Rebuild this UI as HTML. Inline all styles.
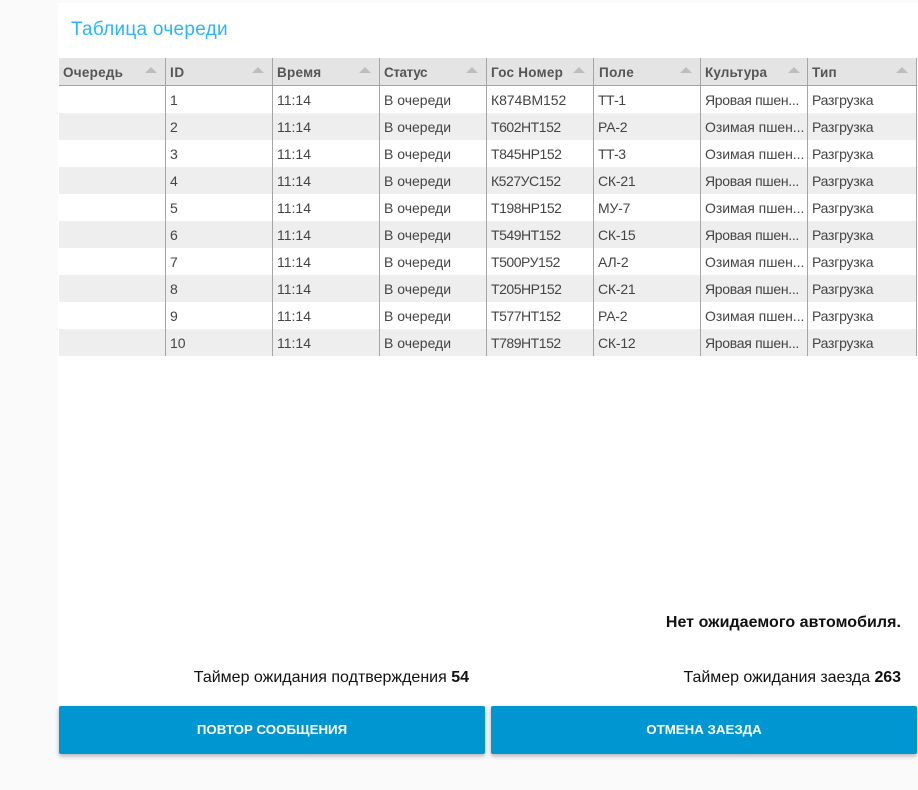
<!DOCTYPE html>
<html lang="ru">
<head>
<meta charset="utf-8">
<style>
html,body{margin:0;padding:0;width:918px;height:790px;overflow:hidden;background:#fafafa;font-family:"Liberation Sans","DejaVu Sans",sans-serif;}
#p{position:absolute;left:58px;top:3px;width:860px;height:703px;background:#fff}
#t{position:absolute;left:71px;top:19px;font-size:19px;line-height:22px;color:#29b6f6;letter-spacing:.27px;white-space:nowrap}
.th,.r,.v,.h,.a{position:absolute}
.th{left:59px;top:58px;width:858px;height:27px;background:#e4e4e4}
.l{position:absolute;left:59px;top:85px;width:858px;height:1px;background:#a3a3a3}
.r{left:59px;width:858px;height:27px}
.g{background:#eee}
.v{top:58px;width:1px;height:298px;background:#a5a5a5}
.h{top:64px;font-size:13.5px;line-height:18px;font-weight:bold;color:#555;white-space:nowrap;letter-spacing:.25px}
.a{top:67px;width:0;height:0;border-left:6px solid transparent;border-right:6px solid transparent;border-bottom:6px solid #bdbdbd}
.w{position:absolute;left:0;height:18px;width:100%}
.w span{position:absolute;top:0;font-size:14px;line-height:18px;color:#444;white-space:nowrap}
.i{left:170px}.m1{left:277px}.s{left:384px}.n{left:491px;letter-spacing:-.47px}.n2{left:491px;letter-spacing:-.08px}
.f{left:598px;letter-spacing:-.2px}.f2{left:598px;letter-spacing:-.5px}.c1{left:705px;letter-spacing:-.3px}.c2{left:705px;letter-spacing:-.05px}.y{left:812px;letter-spacing:-.22px}
.m{position:absolute;font-size:16px;line-height:20px;color:#111;white-space:nowrap}
.b{position:absolute;top:706px;width:426px;height:48px;background:#0096d1;border-radius:2px;box-shadow:0 2px 4px rgba(0,0,0,.3);color:#fff;font-weight:bold;font-size:13.3px;line-height:48px;text-align:center}
</style>
</head>
<body>
<div id="p"></div>
<div id="t">Таблица очереди</div>
<div class="th"></div>
<div class="r g" style="top:113px"></div>
<div class="r g" style="top:167px"></div>
<div class="r g" style="top:221px"></div>
<div class="r g" style="top:275px"></div>
<div class="r g" style="top:329px"></div>
<div class="l"></div>
<div class="v" style="left:165px"></div>
<div class="v" style="left:272px"></div>
<div class="v" style="left:379px"></div>
<div class="v" style="left:486px"></div>
<div class="v" style="left:593px"></div>
<div class="v" style="left:700px"></div>
<div class="v" style="left:807px"></div>
<div class="v" style="left:916px"></div>

<div class="h" style="left:63px">Очередь</div><div class="a" style="left:145px"></div>
<div class="h" style="left:170px;letter-spacing:.6px">ID</div><div class="a" style="left:252px"></div>
<div class="h" style="left:277px">Время</div><div class="a" style="left:359px"></div>
<div class="h" style="left:384px;letter-spacing:-.4px">Статус</div><div class="a" style="left:466px"></div>
<div class="h" style="left:491px">Гос Номер</div><div class="a" style="left:573px"></div>
<div class="h" style="left:599px;letter-spacing:.4px">Поле</div><div class="a" style="left:680px"></div>
<div class="h" style="left:705px;letter-spacing:.1px">Культура</div><div class="a" style="left:788px"></div>
<div class="h" style="left:812px">Тип</div><div class="a" style="left:896px"></div>

<div class="w" style="top:91px"><span class="i">1</span><span class="m1">11:14</span><span class="s">В очереди</span><span class="n2">К874ВМ152</span><span class="f2">ТТ-1</span><span class="c1">Яровая пшен...</span><span class="y">Разгрузка</span></div>
<div class="w" style="top:118px"><span class="i">2</span><span class="m1">11:14</span><span class="s">В очереди</span><span class="n">Т602НТ152</span><span class="f">РА-2</span><span class="c2">Озимая пшен...</span><span class="y">Разгрузка</span></div>
<div class="w" style="top:145px"><span class="i">3</span><span class="m1">11:14</span><span class="s">В очереди</span><span class="n">Т845НР152</span><span class="f2">ТТ-3</span><span class="c2">Озимая пшен...</span><span class="y">Разгрузка</span></div>
<div class="w" style="top:172px"><span class="i">4</span><span class="m1">11:14</span><span class="s">В очереди</span><span class="n">К527УС152</span><span class="f">СК-21</span><span class="c1">Яровая пшен...</span><span class="y">Разгрузка</span></div>
<div class="w" style="top:199px"><span class="i">5</span><span class="m1">11:14</span><span class="s">В очереди</span><span class="n">Т198НР152</span><span class="f">МУ-7</span><span class="c2">Озимая пшен...</span><span class="y">Разгрузка</span></div>
<div class="w" style="top:226px"><span class="i">6</span><span class="m1">11:14</span><span class="s">В очереди</span><span class="n">Т549НТ152</span><span class="f">СК-15</span><span class="c1">Яровая пшен...</span><span class="y">Разгрузка</span></div>
<div class="w" style="top:253px"><span class="i">7</span><span class="m1">11:14</span><span class="s">В очереди</span><span class="n">Т500РУ152</span><span class="f">АЛ-2</span><span class="c2">Озимая пшен...</span><span class="y">Разгрузка</span></div>
<div class="w" style="top:280px"><span class="i">8</span><span class="m1">11:14</span><span class="s">В очереди</span><span class="n">Т205НР152</span><span class="f">СК-21</span><span class="c1">Яровая пшен...</span><span class="y">Разгрузка</span></div>
<div class="w" style="top:307px"><span class="i">9</span><span class="m1">11:14</span><span class="s">В очереди</span><span class="n">Т577НТ152</span><span class="f">РА-2</span><span class="c2">Озимая пшен...</span><span class="y">Разгрузка</span></div>
<div class="w" style="top:334px"><span class="i">10</span><span class="m1">11:14</span><span class="s">В очереди</span><span class="n">Т789НТ152</span><span class="f">СК-12</span><span class="c1">Яровая пшен...</span><span class="y">Разгрузка</span></div>

<div class="m" style="right:17px;top:613px;font-weight:bold;letter-spacing:.05px">Нет ожидаемого автомобиля.</div>
<div class="m" style="right:449px;top:668px">Таймер ожидания подтверждения <b>54</b></div>
<div class="m" style="right:17px;top:668px;letter-spacing:-.05px">Таймер ожидания заезда <b>263</b></div>
<div class="b" style="left:59px">ПОВТОР СООБЩЕНИЯ</div>
<div class="b" style="left:491px">ОТМЕНА ЗАЕЗДА</div>
</body>
</html>
